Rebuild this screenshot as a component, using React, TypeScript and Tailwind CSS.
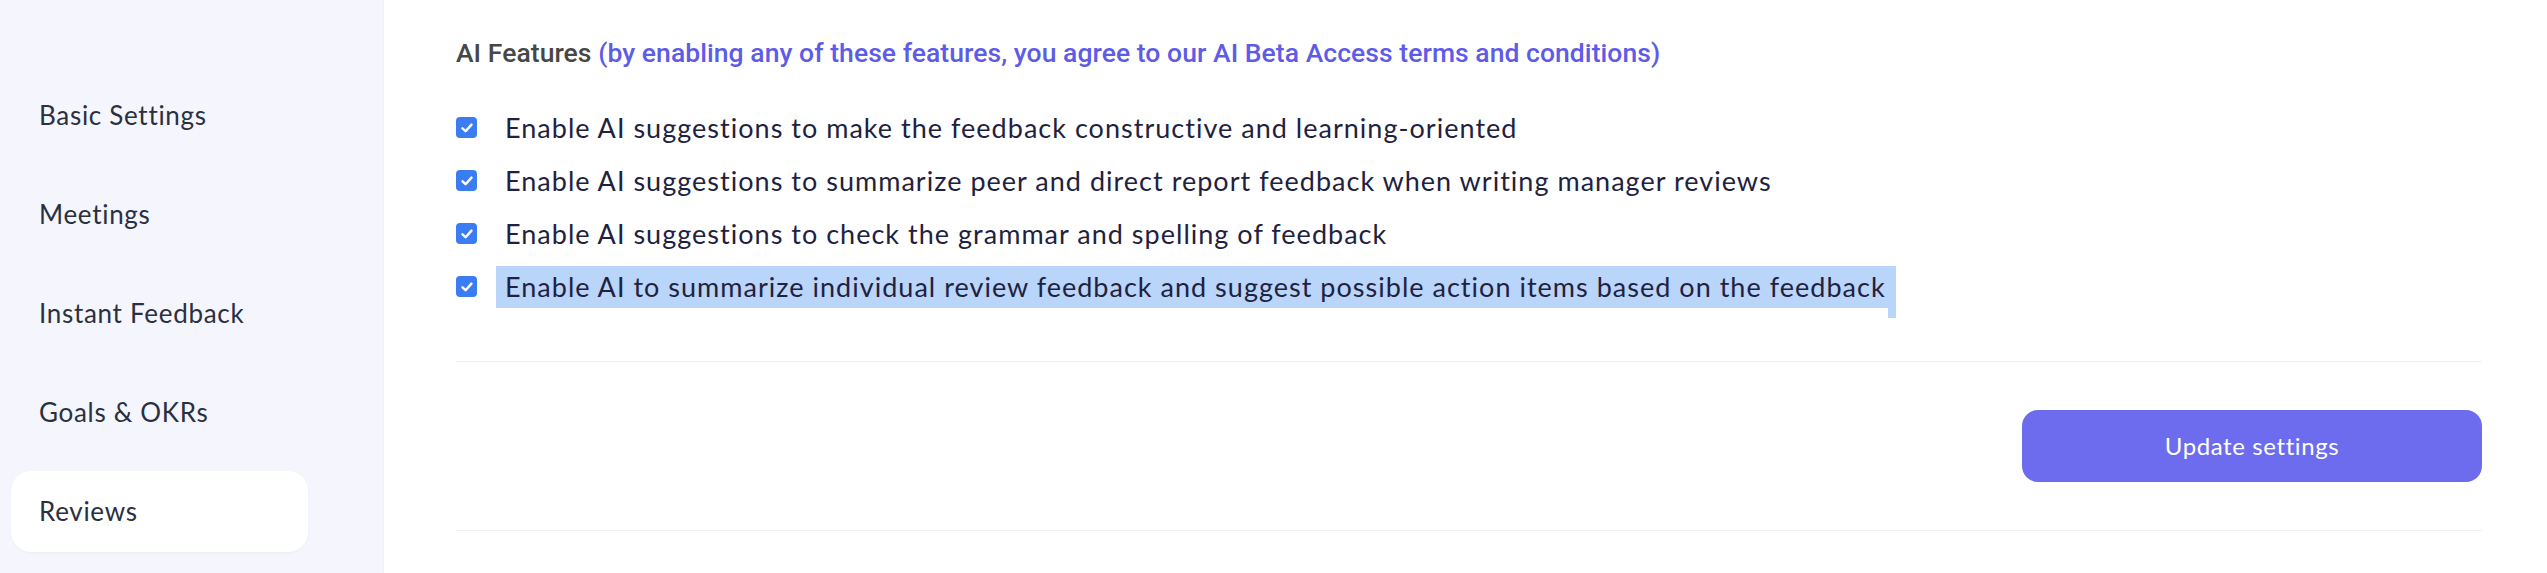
import React from "react";

const items = [
  "Enable AI suggestions to make the feedback constructive and learning-oriented",
  "Enable AI suggestions to summarize peer and direct report feedback when writing manager reviews",
  "Enable AI suggestions to check the grammar and spelling of feedback",
  "Enable AI to summarize individual review feedback and suggest possible action items based on the feedback",
];

const nav = ["Basic Settings", "Meetings", "Instant Feedback", "Goals & OKRs", "Reviews"];

function Check() {
  return (
    <div className="w-[21px] h-[21px] rounded-[4px] bg-[#3b7cf2] flex items-center justify-center shrink-0">
      <svg width="14" height="14" viewBox="0 0 14 14" fill="none">
        <path d="M2.5 7.3 L5.6 10.2 L11.5 3.6" stroke="white" strokeWidth="2.4" strokeLinecap="round" strokeLinejoin="round" />
      </svg>
    </div>
  );
}

export default function App() {
  return (
    <div className="flex w-[2547px] h-[573px] bg-white overflow-hidden" style={{ fontFamily: "Lato, 'Noto Sans', sans-serif" }}>
      <aside className="w-[384px] shrink-0 bg-[#f4f5fd] border-r border-[#eef0fa] pt-[75px] flex flex-col gap-[18px]">
        {nav.map((n) => (
          <div
            key={n}
            className={`mx-[11px] w-[297px] h-[81px] shrink-0 rounded-[20px] pl-[28px] flex items-center text-[26px] tracking-[0.7px] text-[#2b3040] ${n === "Reviews" ? "bg-white shadow-[0_1px_3px_rgba(0,0,0,0.04)]" : ""}`}
          >
            {n}
          </div>
        ))}
      </aside>
      <main className="flex-1 pl-[72px] pr-[65px] pt-[35px]">
        <div className="h-[36px] leading-[36px] text-[26.5px] font-medium tracking-[0.05px] whitespace-nowrap" style={{ fontFamily: "Roboto, sans-serif" }}>
          <span className="text-[#474747]">AI Features </span>
          <span className="text-[#5e5ce6]">(by enabling any of these features, you agree to our AI Beta Access terms and conditions)</span>
        </div>
        <div className="mt-[30px] flex flex-col">
          {items.map((t, i) => (
            <div key={i} className="h-[53px] flex items-center">
              <Check />
              <div className="ml-[28px] text-[27px] tracking-[1.02px] text-[#221f3f] whitespace-nowrap relative">
                {i === 3 ? (
                  <span className="relative inline-flex">
                    <span className="bg-[#b9d5f9] pl-[9px] pr-[2px] -ml-[9px] leading-[42px]">{t}</span>
                    <span className="absolute right-[-8px] top-0 w-[8px] h-[52px] bg-[#b9d5f9]" />
                  </span>
                ) : (
                  <span className="leading-[42px]">{t}</span>
                )}
              </div>
            </div>
          ))}
        </div>
        <div className="mt-[48px] border-t border-b border-[#f0f1f4] py-[48px] flex justify-end">
          <button className="w-[460px] h-[72px] rounded-[16px] bg-[#6d6cee] text-white text-[24px] tracking-[0.6px]">
            Update settings
          </button>
        </div>
      </main>
    </div>
  );
}
